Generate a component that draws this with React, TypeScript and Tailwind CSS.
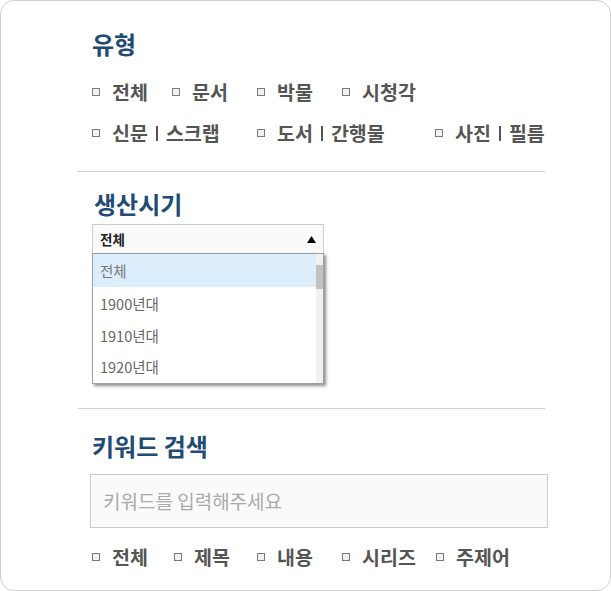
import React from "react";

const font = { fontFamily: '"Noto Sans CJK KR", "Noto Sans", sans-serif' };

function Check({ label, w }: { label: React.ReactNode; w?: string }) {
  return (
    <div className={`flex items-center h-[24px] ${w ?? ""}`}>
      <span className="w-[8px] h-[8px] border border-[#7a7a7a] bg-[#eef1f5] mr-[12px] shrink-0" />
      <span className="text-[19.5px] font-bold text-[#555] leading-[24px] whitespace-pre flex items-center">{label}</span>
    </div>
  );
}

function Pair({ a, b }: { a: string; b: string }) {
  return (
    <>
      <span>{a}</span>
      <span className="mx-[8px] w-[2px] h-[15px] bg-[#555] inline-block" />
      <span>{b}</span>
    </>
  );
}

export default function App() {
  return (
    <div style={font} className="w-[611px] h-[591px] bg-white">
      <div className="w-[611px] h-[591px] border border-[#d0d0d0] rounded-[14px] bg-white pl-[77px] pt-[27px] flex flex-col">
        <div className="pl-[14px] flex flex-col">
          <h2 className="text-[24px] font-bold text-[#1f4b74] leading-[32px]">유형</h2>
          <div className="flex mt-[20px]">
            <Check label="전체" w="w-[80px]" />
            <Check label="문서" w="w-[85px]" />
            <Check label="박물" w="w-[85px]" />
            <Check label="시청각" />
          </div>
          <div className="flex mt-[17px]">
            <Check label={<Pair a="신문" b="스크랩" />} w="w-[165px]" />
            <Check label={<Pair a="도서" b="간행물" />} w="w-[178px]" />
            <Check label={<Pair a="사진" b="필름" />} />
          </div>
        </div>
        <div className="w-[467px] border-t border-[#cfcfcf] mt-[26px]" />
        <div className="pl-[14px] flex flex-col">
          <h2 className="text-[24px] font-bold text-[#1f4b74] leading-[32px] mt-[16px] pl-[2px]">생산시기</h2>
          <div className="relative mt-[4px] w-[232px]">
            <div className="h-[30px] border border-[#cccccc] bg-[#fafafa] flex items-center justify-between pl-[7px] pr-[7px]">
              <span className="text-[13.5px] font-bold text-[#222]">전체</span>
              <svg width="9" height="7" viewBox="0 0 9 7"><polygon points="4.5,0 9,7 0,7" fill="#000" /></svg>
            </div>
            <div className="absolute left-0 top-[29px] w-[232px] h-[131px] border border-[#a0a0a0] bg-white shadow-[2px_2px_3px_rgba(0,0,0,0.45)] overflow-hidden flex">
              <div className="flex-1 flex flex-col">
                <div className="h-[34px] bg-[#dcedfc] flex items-center pl-[7px] text-[14.5px] text-[#777]">전체</div>
                <div className="h-[33px] flex items-center pl-[7px] text-[14.5px] text-[#666]">1900년대</div>
                <div className="h-[32px] flex items-center pl-[7px] text-[14.5px] text-[#666]">1910년대</div>
                <div className="h-[32px] flex items-center pl-[7px] text-[14.5px] text-[#666]">1920년대</div>
              </div>
              <div className="w-[7px] bg-[#f1f1f1] flex flex-col">
                <div className="h-[11px]" />
                <div className="h-[24px] bg-[#c1c1c1]" />
              </div>
            </div>
          </div>
        </div>
        <div className="w-[467px] border-t border-[#cfcfcf] mt-[154px]" />
        <div className="pl-[14px] flex flex-col">
          <h2 className="text-[24px] font-bold text-[#1f4b74] leading-[32px] mt-[21px]">키워드 검색</h2>
          <div className="mt-[12px] -ml-[2px] w-[458px] h-[54px] border border-[#cccccc] bg-[#fafafa] flex items-center pl-[12px]">
            <span className="text-[19px] text-[#aaaaaa]">키워드를 입력해주세요</span>
          </div>
          <div className="flex mt-[17px]">
            <Check label="전체" w="w-[82px]" />
            <Check label="제목" w="w-[83px]" />
            <Check label="내용" w="w-[85px]" />
            <Check label="시리즈" w="w-[94px]" />
            <Check label="주제어" />
          </div>
        </div>
      </div>
    </div>
  );
}
